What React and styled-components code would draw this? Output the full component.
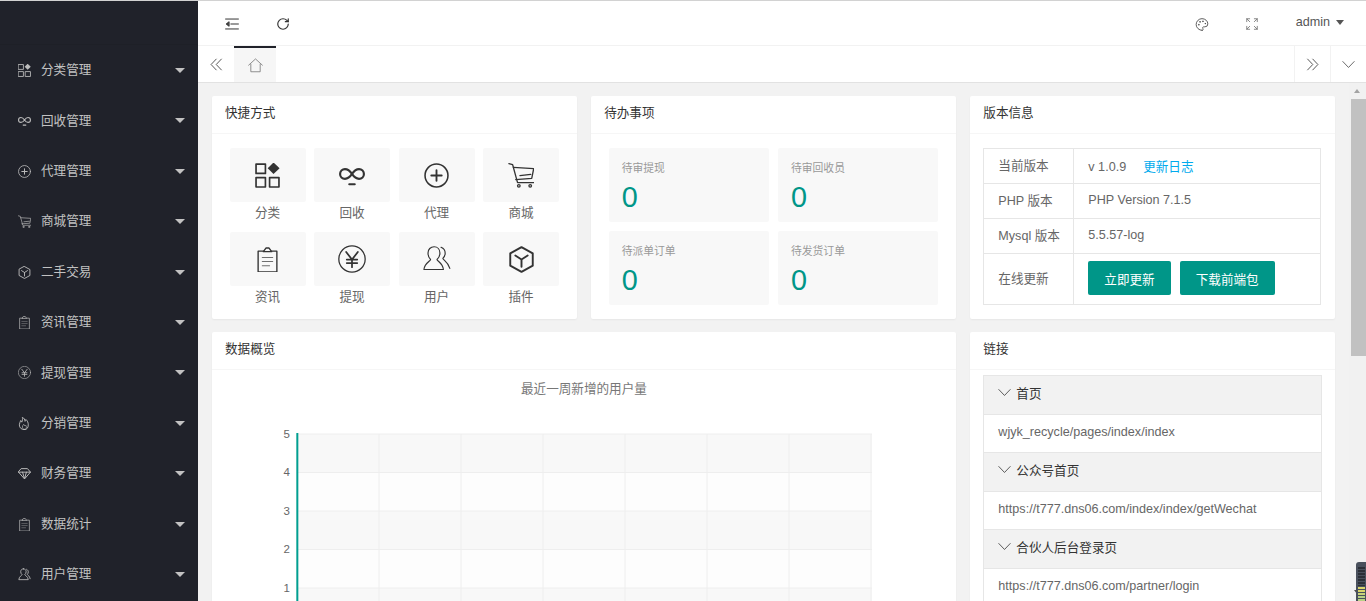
import React from 'react';
import styled, { createGlobalStyle } from 'styled-components';
import { Palette, RotateCw } from 'lucide-react';

const GlobalStyle = createGlobalStyle`
  html, body, #root {
    height: 100%;
    margin: 0;
    overflow: hidden;
  }
  body {
    font-family: "Liberation Sans", "Noto Sans CJK SC", sans-serif;
    font-size: 12.6px;
    color: #666;
    background: #f2f2f2;
  }
  * { box-sizing: border-box; }
`;

const Page = styled.div`
  position: relative;
  display: flex;
  height: 601px;
  border-top: 1px solid #d2d2d2;
  overflow: hidden;
`;

const Sidebar = styled.aside`
  width: 198px;
  flex: none;
  background: #20222a;
  color: #c2c2c2;
`;

const Logo = styled.div`
  height: 44.4px;
  border-bottom: 1px solid #1e2027;
`;

const MenuItem = styled.div`
  display: flex;
  align-items: center;
  height: 50.4px;
  padding: 0 13px 0 18px;
`;

const MenuIcon = styled.span`
  display: flex;
  width: 13px;
  height: 13px;
  margin-right: 10px;
  color: #bcbcbc;
`;

const MenuLabel = styled.span`
  flex: 1;
  line-height: 1;
`;

const MenuCaret = styled.span`
  width: 0;
  height: 0;
  margin-right: 0.5px;
  border-style: solid;
  border-width: 5px 5.5px 0;
  border-color: #c2c2c2 transparent transparent;
`;

const Main = styled.div`
  flex: 1;
  min-width: 0;
  display: flex;
  flex-direction: column;
`;

const TopBar = styled.header`
  height: 45px;
  flex: none;
  display: flex;
  align-items: center;
  background: #fff;
  border-bottom: 1px solid #f2f2f2;
  padding: 2px 22px 0 27px;
  color: #333;
`;

const TopIcon = styled.span`
  display: flex;
  width: 14px;
  height: 14px;
  margin-right: ${p => p.$gap || 0}px;
  color: ${p => p.$color || '#333'};
`;

const Spacer = styled.div`
  flex: 1;
`;

const UserName = styled.span`
  color: #555;
  margin-left: 37px;
  margin-top: -4px;
`;

const UserCaret = styled.span`
  width: 0;
  height: 0;
  margin: -3px 0 0 6px;
  border-style: solid;
  border-width: 5px 4.5px 0;
  border-color: #555 transparent transparent;
`;

const TabBar = styled.nav`
  height: 37px;
  flex: none;
  display: flex;
  background: #fff;
  border-bottom: 1px solid #e2e2e2;
`;

const TabButton = styled.span`
  width: 36px;
  display: flex;
  align-items: center;
  justify-content: center;
  color: #555;
  border-left: ${p => (p.$divided ? '1px solid #f2f2f2' : 'none')};
`;

const HomeTab = styled.span`
  width: 42px;
  display: flex;
  align-items: center;
  justify-content: center;
  background: #f6f6f6;
  border-top: 2px solid #20222a;
  color: #777;
`;

const TabIcon = styled.span`
  display: flex;
  width: ${p => p.$size}px;
  height: ${p => p.$size}px;
`;

const Body = styled.div`
  flex: 1;
  min-height: 0;
  display: flex;
`;

const Content = styled.main`
  flex: 1;
  min-width: 0;
  overflow: hidden;
  padding: 13px 13.5px;
  display: grid;
  grid-template-columns: repeat(3, 1fr);
  grid-template-rows: 223px auto;
  gap: 13px 13.5px;
  align-items: start;
`;

const Card = styled.section`
  background: #fff;
  border-radius: 2px;
  box-shadow: 0 1px 2px rgba(0, 0, 0, 0.05);
  height: ${p => p.$height || 'auto'};
  grid-column: ${p => p.$span || 'auto'};
`;

const CardHead = styled.div`
  height: 38px;
  line-height: 35px;
  padding: 0 13.5px;
  color: #333;
  border-bottom: 1px solid #f6f6f6;
`;

const ShortcutGrid = styled.div`
  display: grid;
  grid-template-columns: repeat(4, 1fr);
  column-gap: 8.4px;
  grid-auto-rows: 84px;
  padding: 14px 18px 0;
`;

const Shortcut = styled.div`
  text-align: center;
`;

const ShortcutBox = styled.div`
  height: 54px;
  display: flex;
  align-items: center;
  justify-content: center;
  background: #f8f8f8;
  border-radius: 2px;
  color: #333;
  & > svg {
    width: ${p => p.$size || 25}px;
    height: ${p => p.$size || 25}px;
  }
`;

const ShortcutLabel = styled.div`
  line-height: 22px;
  color: #666;
`;

const TodoGrid = styled.div`
  display: grid;
  grid-template-columns: 1fr 1fr;
  grid-auto-rows: 74px;
  gap: 9px;
  padding: 14px 18px 0;
`;

const TodoCell = styled.div`
  background: #f8f8f8;
  border-radius: 2px;
  padding: 14px 13px;
`;

const TodoLabel = styled.div`
  font-size: 10.8px;
  line-height: 13px;
  color: #999;
`;

const TodoValue = styled.div`
  font-size: 28.8px;
  line-height: 34px;
  margin-top: 5px;
  color: #009688;
`;

const VersionTable = styled.table`
  width: 338px;
  margin: 14px 0 0 13.5px;
  border-collapse: collapse;
  table-layout: fixed;
  td {
    height: 35px;
    padding: 0 0 2px 14px;
    border: 1px solid #e6e6e6;
    color: #666;
    white-space: nowrap;
  }
  td:first-child {
    width: 90px;
    padding-bottom: 4px;
  }
  tr:last-child td { height: 51px; }
`;

const LogLink = styled.a`
  color: #01aaed;
  margin-left: 17px;
`;

const PrimaryButton = styled.button`
  height: 34px;
  padding: 0 16px;
  margin-right: 9px;
  border: 0;
  border-radius: 2px;
  background: #009688;
  color: #fff;
  font: inherit;
`;

const ChartTitle = styled.div`
  text-align: center;
  line-height: 14px;
  padding-top: 12px;
  color: #777;
`;

const ChartSvg = styled.svg`
  display: block;
  margin-top: 15px;
`;

const Collapse = styled.div`
  margin: 5px 13.5px 0;
  border: 1px solid #e6e6e6;
  border-bottom: 0;
`;

const CollapseTitle = styled.div`
  height: 39px;
  display: flex;
  align-items: center;
  gap: 5px;
  padding: 0 0 6px 14px;
  background: #f2f2f2;
  color: #333;
  border-bottom: 1px solid #e6e6e6;
`;

const CollapseArrow = styled.span`
  display: flex;
  width: 13px;
  height: 13px;
  color: #444;
`;

const CollapseBody = styled.div`
  height: 38px;
  line-height: 35px;
  padding-left: 14px;
  color: #666;
  border-bottom: 1px solid #e6e6e6;
`;

const ScrollBar = styled.div`
  width: 17px;
  flex: none;
  background: #f1f1f1;
  padding-top: 16px;
  display: flex;
  flex-direction: column;
  align-items: flex-end;
  position: relative;
`;

const ScrollUp = styled.span`
  position: absolute;
  top: 6px;
  left: 5px;
  width: 0;
  height: 0;
  border-style: solid;
  border-width: 0 3.5px 4px;
  border-color: transparent transparent #a3a3a3;
`;

const ScrollDown = styled.span`
  position: absolute;
  bottom: 7px;
  left: 5px;
  width: 0;
  height: 0;
  border-style: solid;
  border-width: 4px 3.5px 0;
  border-color: #505050 transparent transparent;
`;

const ScrollThumb = styled.div`
  width: 15px;
  height: 257px;
  background: #c1c1c1;
`;

const Widget = styled.div`
  position: absolute;
  right: 0;
  bottom: 0;
  width: 10px;
  height: 39px;
  border-radius: 3px 0 0 0;
  background: #49505c;
  padding: 5px 1px 0 2px;
  display: flex;
  flex-direction: column;
  gap: 1px;
`;

const WidgetBar = styled.span`
  height: 2px;
  background: ${p => p.$color};
`;

const Icon = ({ children, fill = 'none', sw = 1.6 }) => (
  <svg
    width="100%"
    height="100%"
    viewBox="0 0 24 24"
    fill={fill}
    stroke="currentColor"
    strokeWidth={sw}
    strokeLinecap="round"
    strokeLinejoin="round"
  >
    {children}
  </svg>
);

const AppsIcon = () => (
  <Icon sw={1.6}>
    <rect x="1" y="1" width="9" height="9" />
    <rect x="1" y="14" width="9" height="9" />
    <rect x="14" y="14" width="9" height="9" />
    <path d="M17.8 -0.5 L23.6 5 L17.8 10.6 L12.2 5 Z" fill="currentColor" stroke="none" />
  </Icon>
);

const LinkIcon = () => (
  <Icon sw={2}>
    <path d="M12 11C10 8 8 6.500 5.500 6.500a4.500 4.500 0 0 0 0 9c2.500 0 4.500-1.500 6.500-4.500s4-4.500 6.500-4.500a4.500 4.500 0 0 1 0 9c-2.500 0-4.500-1.500-6.500-4.500z" />
    <path d="M9.500 20.500h5" />
  </Icon>
);

const PlusIcon = () => (
  <Icon sw={1.5}>
    <circle cx="12" cy="12" r="11" />
    <path d="M12 7v10M7 12h10" strokeWidth="1.8" />
  </Icon>
);

const CartIcon = () => (
  <Icon sw={1.2}>
    <path d="M.8 1.500l3.500 1 4.500 16.500h15" />
    <path d="M5 5l18.700 1.200-1.800 9-14.800 1" />
    <path d="M11 12.500l10-1" />
    <circle cx="10" cy="22" r="1.200" />
    <circle cx="20.500" cy="22" r="1.200" />
  </Icon>
);

const FormIcon = () => (
  <Icon sw={1.3}>
    <path d="M8 4H3v20h18V4h-5" />
    <path d="M8 4.500h8L13.500 1h-3z" />
    <path d="M7 10h10M7 14h10M7 18h7" strokeWidth="1" opacity="0.7" />
  </Icon>
);

const YenIcon = () => (
  <Icon sw={1.1}>
    <circle cx="12" cy="12" r="11.300" />
    <path d="M7 6l5 6.500L17 6M12 12.500V19M7.500 12.500h9M7.500 15.500h9" strokeWidth="1.500" />
  </Icon>
);

const UsersIcon = () => (
  <Icon sw={1}>
    <path d="M9.500 1.500c3 0 5 2.300 5 5.300 0 2.500-1 4.400-2.500 5.600 0 1.200 5 3 5.500 8.600H.8c.5-5.600 5.700-7.400 5.700-8.600C5 11.200 4.300 9.300 4.300 6.800c0-3 2.200-5.300 5.200-5.300z" />
    <path d="M15.500 2c2.500 1 3.500 3 3.500 5 0 2-1 3.500-2 4.500.5 1.500 4.500 3 6 8.500" />
  </Icon>
);

const CubeIcon = () => (
  <Icon sw={1.7}>
    <path d="M12 1l10 5.500v11L12 23 2 17.500v-11z" />
    <path d="M6.500 8.500L12 12l5.500-3.500M12 12v6.500" />
  </Icon>
);

const FlameIcon = () => (
  <Icon sw={1.7}>
    <path d="M12 23.500c-5.500 0-9.500-3.500-9.500-9 0-3 1.500-5 2.500-8 1 .8 1.700 1.800 2 3 1.500-3 1.500-6 1-9 3.500 1.500 4.500 4.500 5 7.500 1-.8 1.500-2 1.500-3.500 3 2.500 4.500 6 4.500 10 0 5-2.500 9-7 9z" />
    <path d="M12 23c-2.500 0-4-2-4-4.500 0-2 1.500-3.500 2.500-5 1 1 1.500 2 2 3 .7-.5 1-1 1.500-1.500 1 1.200 1.500 2.500 1.500 4 0 2.500-1.500 4-3.500 4z" strokeWidth="1.200" />
  </Icon>
);

const GemIcon = () => (
  <Icon sw={1.8}>
    <path d="M6.500 3h11l5.500 6.500L12 22 1 9.500zM1 9.500h22M8.500 9.500L12 22l3.500-12.500" />
  </Icon>
);

const PersonIcon = () => (
  <Icon sw={1.6}>
    <path d="M10 1.500c3 0 5 2.300 5 5.300 0 2.500-1 4.200-2.500 5.500 0 1.500 6 3 6.500 9.200H1.500c.5-6.200 6-7.700 6-9.200C6 11 5 9.300 5 6.800c0-3 2-5.300 5-5.300z" />
    <path d="M16 2.500c2 1 3 2.800 3 4.800s-1 3.500-2 4.500c1 1.200 4.500 3 5.500 8" />
  </Icon>
);

const FoldIcon = () => (
  <Icon sw={1.7}>
    <path d="M1 3.500h22M10 12h13M1 20.500h22" />
    <path d="M6.500 8.500L2 12l4.500 3.500z" fill="currentColor" />
  </Icon>
);

const FullscreenIcon = () => (
  <Icon sw={1.5}>
    <path d="M3 8V3h5M3 3l5 5M21 8V3h-5M21 3l-5 5M3 16v5h5M3 21l5-5M21 16v5h-5M21 21l-5-5" />
  </Icon>
);

const HomeIcon = () => (
  <Icon sw={1.3}>
    <path d="M1 11.500L12 1.500l11 10M4.500 10v12h15V10" />
  </Icon>
);

const DoubleLeft = () => (
  <Icon sw={1.8}>
    <path d="M11.500 2L2 12l9.500 10M21 2l-9.500 10L21 22" />
  </Icon>
);

const DoubleRight = () => (
  <Icon sw={1.8}>
    <path d="M3 2l9.500 10L3 22M12.500 2L22 12l-9.500 10" />
  </Icon>
);

const ChevronThin = () => (
  <Icon sw={1.6}>
    <path d="M1.500 6.500L12 17.500 22.500 6.500" />
  </Icon>
);

const menus = [
  ['分类管理', <AppsIcon />],
  ['回收管理', <LinkIcon />],
  ['代理管理', <PlusIcon />],
  ['商城管理', <CartIcon />],
  ['二手交易', <CubeIcon />],
  ['资讯管理', <FormIcon />],
  ['提现管理', <YenIcon />],
  ['分销管理', <FlameIcon />],
  ['财务管理', <GemIcon />],
  ['数据统计', <FormIcon />],
  ['用户管理', <PersonIcon />],
];

const shortcuts = [
  ['分类', <AppsIcon />, 25],
  ['回收', <LinkIcon />, 26],
  ['代理', <PlusIcon />, 25],
  ['商城', <CartIcon />, 26],
  ['资讯', <FormIcon />, 25],
  ['提现', <YenIcon />, 28],
  ['用户', <UsersIcon />, 28],
  ['插件', <CubeIcon />, 27],
];

const todos = [
  ['待审提现', 0],
  ['待审回收员', 0],
  ['待派单订单', 0],
  ['待发货订单', 0],
];

const links = [
  ['首页', 'wjyk_recycle/pages/index/index'],
  ['公众号首页', 'https://t777.dns06.com/index/index/getWechat'],
  ['合伙人后台登录页', 'https://t777.dns06.com/partner/login'],
];

const bands = [0, 1, 2, 3, 4];
const columns = [0, 1, 2, 3, 4, 5, 6, 7];

const UserChart = () => (
  <ChartSvg width="744" height="210">
    {bands.map(i => (
      <rect
        key={i}
        x="86"
        y={23 + i * 38.5}
        width="574"
        height="38.5"
        fill={i % 2 === 0 ? '#f8f8f8' : '#fdfdfd'}
      />
    ))}
    {bands.map(i => (
      <line key={i} x1="86" x2="660" y1={23 + i * 38.5} y2={23 + i * 38.5} stroke="#eee" />
    ))}
    {columns.map(i => (
      <line key={i} x1={85 + i * 82} x2={85 + i * 82} y1="23" y2="210" stroke="#eee" />
    ))}
    <line x1="85.330" x2="85.330" y1="22" y2="210" stroke="#009f91" strokeWidth="2" />
    {[5, 4, 3, 2, 1].map((n, i) => (
      <text key={n} x="78" y={26.5 + i * 38.5} textAnchor="end" fontSize="11.500" fill="#666">
        {n}
      </text>
    ))}
  </ChartSvg>
);

const App = () => (
  <>
    <GlobalStyle />
    <Page>
      <Sidebar>
        <Logo />
        {menus.map(([label, icon]) => (
          <MenuItem key={label}>
            <MenuIcon>{icon}</MenuIcon>
            <MenuLabel>{label}</MenuLabel>
            <MenuCaret />
          </MenuItem>
        ))}
      </Sidebar>
      <Main>
        <TopBar>
          <TopIcon $gap={37}><FoldIcon /></TopIcon>
          <TopIcon><RotateCw size={14} strokeWidth={2} /></TopIcon>
          <Spacer />
          <TopIcon $gap={36} $color="#555"><Palette size={15} strokeWidth={1.6} /></TopIcon>
          <TopIcon $color="#777"><FullscreenIcon /></TopIcon>
          <UserName>admin</UserName>
          <UserCaret />
        </TopBar>
        <TabBar>
          <TabButton><TabIcon $size={13}><DoubleLeft /></TabIcon></TabButton>
          <HomeTab><TabIcon $size={15}><HomeIcon /></TabIcon></HomeTab>
          <Spacer />
          <TabButton $divided><TabIcon $size={13}><DoubleRight /></TabIcon></TabButton>
          <TabButton $divided><TabIcon $size={13}><ChevronThin /></TabIcon></TabButton>
        </TabBar>
        <Body>
          <Content>
            <Card $height="223px">
              <CardHead>快捷方式</CardHead>
              <ShortcutGrid>
                {shortcuts.map(([label, icon, size]) => (
                  <Shortcut key={label}>
                    <ShortcutBox $size={size}>{icon}</ShortcutBox>
                    <ShortcutLabel>{label}</ShortcutLabel>
                  </Shortcut>
                ))}
              </ShortcutGrid>
            </Card>
            <Card $height="223px">
              <CardHead>待办事项</CardHead>
              <TodoGrid>
                {todos.map(([label, value]) => (
                  <TodoCell key={label}>
                    <TodoLabel>{label}</TodoLabel>
                    <TodoValue>{value}</TodoValue>
                  </TodoCell>
                ))}
              </TodoGrid>
            </Card>
            <Card $height="223px">
              <CardHead>版本信息</CardHead>
              <VersionTable>
                <tbody>
                  <tr>
                    <td>当前版本</td>
                    <td>v 1.0.9<LogLink>更新日志</LogLink></td>
                  </tr>
                  <tr>
                    <td>PHP 版本</td>
                    <td>PHP Version 7.1.5</td>
                  </tr>
                  <tr>
                    <td>Mysql 版本</td>
                    <td>5.5.57-log</td>
                  </tr>
                  <tr>
                    <td>在线更新</td>
                    <td>
                      <PrimaryButton>立即更新</PrimaryButton>
                      <PrimaryButton>下载前端包</PrimaryButton>
                    </td>
                  </tr>
                </tbody>
              </VersionTable>
            </Card>
            <Card $span="span 2" $height="400px">
              <CardHead>数据概览</CardHead>
              <ChartTitle>最近一周新增的用户量</ChartTitle>
              <UserChart />
            </Card>
            <Card $height="400px">
              <CardHead>链接</CardHead>
              <Collapse>
                {links.map(([title, url]) => (
                  <React.Fragment key={title}>
                    <CollapseTitle>
                      <CollapseArrow><ChevronThin /></CollapseArrow>
                      {title}
                    </CollapseTitle>
                    <CollapseBody>{url}</CollapseBody>
                  </React.Fragment>
                ))}
              </Collapse>
            </Card>
          </Content>
          <ScrollBar>
            <ScrollUp />
            <ScrollThumb />
            <ScrollDown />
          </ScrollBar>
        </Body>
      </Main>
      <Widget>
        {['#2c3038', '#2c3038', '#2c3038', '#2c3038', '#2c3038', '#2c3038', '#2c3038', '#d9d56a', '#d9d56a', '#c8d27a', '#b8d084', '#b8d084'].map((color, i) => (
          <WidgetBar key={i} $color={color} />
        ))}
      </Widget>
    </Page>
  </>
);

export default App;
